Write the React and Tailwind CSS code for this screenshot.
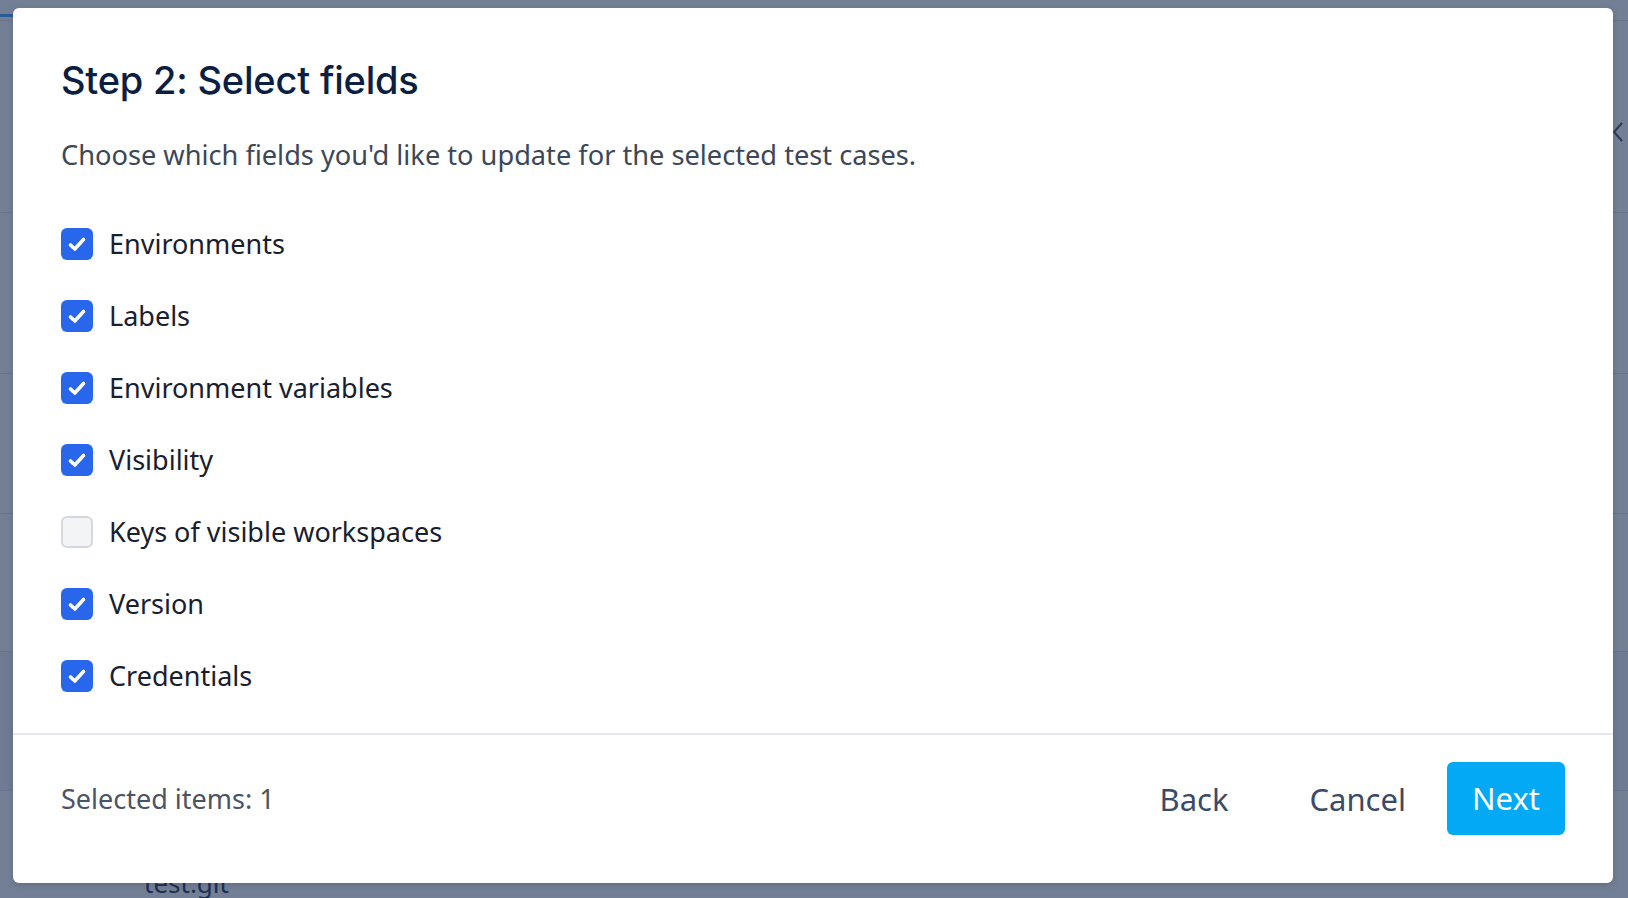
import React, { useState } from "react";

const FIELDS = [
  { id: "environments", label: "Environments", checked: true },
  { id: "labels", label: "Labels", checked: true },
  { id: "envVars", label: "Environment variables", checked: true },
  { id: "visibility", label: "Visibility", checked: true },
  { id: "keys", label: "Keys of visible workspaces", checked: false },
  { id: "version", label: "Version", checked: true },
  { id: "credentials", label: "Credentials", checked: true },
];

const Checkbox = ({ checked }) =>
  checked ? (
    <span className="flex h-8 w-8 shrink-0 items-center justify-center rounded-[6px] bg-[#2866eb]">
      <svg width="32" height="32" viewBox="0 0 32 32" fill="none">
        <path
          d="M9.5 17L13.8 21L22.5 11.5"
          stroke="white"
          strokeWidth="3.6"
          strokeLinecap="round"
          strokeLinejoin="round"
        />
      </svg>
    </span>
  ) : (
    <span className="h-8 w-8 shrink-0 rounded-[6px] border-2 border-[#d5d8de] bg-[#f3f4f6]" />
  );

const App = () => {
  const [fields, setFields] = useState(FIELDS);

  const toggle = (id) =>
    setFields((prev) =>
      prev.map((f) => (f.id === id ? { ...f, checked: !f.checked } : f))
    );

  return (
    <div className="relative h-[898px] w-[1628px] overflow-hidden bg-[#737f95] font-['Noto_Sans',sans-serif]">
      {/* page behind the overlay */}
      <div className="flex h-full flex-col">
        <div className="flex h-[213px] flex-col border-b border-[#68748a]">
          <div className="mt-[14px] h-[3px] w-[40px] bg-[#2a5d9c]" />
          <div className="mt-[3px] border-b border-[#68748a]" />
          <div className="flex flex-1 items-start justify-end pt-[100px] pr-1">
            <svg width="12" height="22" viewBox="0 0 12 22" fill="none">
              <path d="M10 2L2 11L10 20" stroke="#2c3a55" strokeWidth="2" />
            </svg>
          </div>
        </div>
        <div className="h-[161px] border-b border-[#68748a]" />
        <div className="h-[140px] border-b border-[#68748a]" />
        <div className="h-[138px] border-b border-[#68748a]" />
        <div className="h-[139px] border-b border-[#68748a] bg-[#6f7b93]" />
        <div className="flex flex-1 items-end pl-[144px]">
          <span className="text-[26px] leading-[30px] text-[#1f2f55]">test.git</span>
        </div>
      </div>

      {/* overlay + modal */}
      <div className="absolute inset-0 flex pt-[8px] pr-[15px] pb-[15px] pl-[13px]">
        <div className="flex flex-1 flex-col rounded-[6px] bg-white shadow-[0_2px_6px_rgba(0,0,0,0.15)]">
          <div className="flex flex-1 flex-col pt-[50px] pl-[48px] pr-[48px]">
            <h2 className="font-['Inter',sans-serif] text-[38px] font-medium leading-[44px] tracking-[-0.2px] text-[#0c1f42]">
              Step 2: Select fields
            </h2>
            <p className="mt-[36px] text-[27.2px] leading-[34px] text-[#3c4758]">
              Choose which fields you'd like to update for the selected test cases.
            </p>
            <div className="mt-[56px] flex flex-col gap-[40px]">
              {fields.map((f) => (
                <label
                  key={f.id}
                  className="flex h-8 cursor-pointer items-center gap-[16px]"
                  onClick={() => toggle(f.id)}
                >
                  <Checkbox checked={f.checked} />
                  <span className="text-[27px] leading-[32px] text-[#18202f]">{f.label}</span>
                </label>
              ))}
            </div>
          </div>

          {/* footer */}
          <div className="flex items-center border-t-2 border-[#e6e7ec] pt-[27px] pb-[48px] pl-[48px] pr-[48px]">
            <span className="text-[27px] leading-[34px] text-[#4a5466]">Selected items: 1</span>
            <div className="ml-auto flex items-center">
              <button className="mr-[81px] text-[31px] leading-[40px] text-[#3b4a66]">Back</button>
              <button className="mr-[41px] text-[31px] leading-[40px] text-[#3b4a66]">Cancel</button>
              <button className="flex h-[73px] items-center rounded-[6px] bg-[#03a9f4] px-[25px] text-[31px] text-white">
                Next
              </button>
            </div>
          </div>
        </div>
      </div>
    </div>
  );
};

export default App;
